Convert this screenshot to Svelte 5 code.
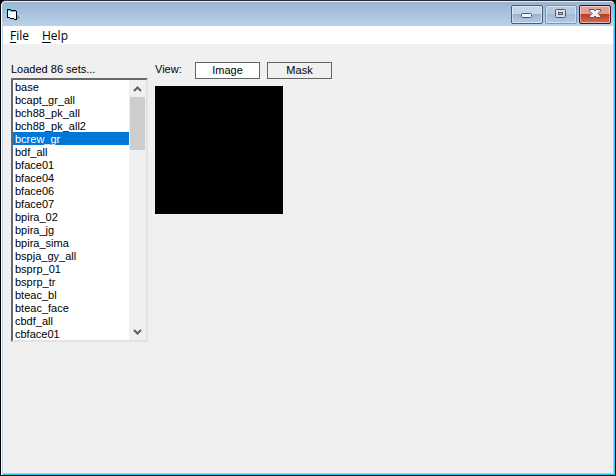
<script>
    const total = 86;
    const sets = [
        "base",
        "bcapt_gr_all",
        "bch88_pk_all",
        "bch88_pk_all2",
        "bcrew_gr",
        "bdf_all",
        "bface01",
        "bface04",
        "bface06",
        "bface07",
        "bpira_02",
        "bpira_jg",
        "bpira_sima",
        "bspja_gy_all",
        "bsprp_01",
        "bsprp_tr",
        "bteac_bl",
        "bteac_face",
        "cbdf_all",
        "cbface01",
    ];

    let selected = $state("bcrew_gr");
    let view = $state("image");
    let list;

    // thumb covers the share of rows that fit in the list
    const thumbSize = (sets.length / total) * 100;

    function scrollRows(n) {
        list.scrollTop += n * 13;
    }
</script>

<div class="window">
    <header class="title-bar">
        <svg class="app-icon" viewBox="0 0 14 12" shape-rendering="crispEdges">
            <path d="M10 6h1v1h1v1h1v1h-1v1h-2z" fill="#8a8f98" />
            <path d="M0 0h4v1h5v1h1v9H7v-1H3V9H0z" fill="#000" />
            <path d="M1 2h3v1h5v7H7V9H3V8H1z" fill="#fff" />
            <path d="M1 1h3v1H1zM3 2h6v1H3z" fill="#00e5e5" />
        </svg>
        <div class="caption-buttons">
            <button class="caption" aria-label="Minimize">
                <svg viewBox="0 0 30 17">
                    <rect x="9.5" y="7.5" width="10" height="4" rx="1" fill="#f4f4f4" stroke="#555563" />
                </svg>
            </button>
            <button class="caption dim" aria-label="Maximize">
                <svg viewBox="0 0 30 17">
                    <rect x="9.5" y="3.5" width="10" height="8" rx="1" fill="#e0dce2" stroke="#555563" />
                    <rect x="12.5" y="6.5" width="4" height="2" fill="#a9c3e3" stroke="#555563" />
                </svg>
            </button>
            <button class="caption close" aria-label="Close">
                <svg viewBox="0 0 30 17">
                    <path
                        d="M9.5 3.5h4l1.5 1.5 1.5-1.5h4v1.5l-2.5 2.5 2.5 2.5v1.5h-4L15 10l-1.500 1.500h-4V10L12 7.500 9.500 5z"
                        fill="#f4f4f4"
                        stroke="#555563"
                    />
                </svg>
            </button>
        </div>
    </header>

    <nav class="menu-bar">
        <button accesskey="f"><u>F</u>ile</button>
        <button accesskey="h"><u>H</u>elp</button>
    </nav>

    <main>
        <section class="sets">
            <label for="sets">Loaded {total} sets...</label>
            <div class="list-box">
                <select id="sets" size="20" bind:value={selected} bind:this={list}>
                    {#each sets as name}
                        <option value={name}>{name}</option>
                    {/each}
                </select>
                <div class="scrollbar">
                    <button aria-label="Scroll up" onclick={() => scrollRows(-1)}>
                        <svg viewBox="0 0 9 6"><path d="M1 5l3.5-3.5L8 5" /></svg>
                    </button>
                    <div class="track">
                        <div class="thumb" style="height: {thumbSize}%"></div>
                    </div>
                    <button aria-label="Scroll down" onclick={() => scrollRows(1)}>
                        <svg viewBox="0 0 9 6"><path d="M1 1l3.5 3.5L8 1" /></svg>
                    </button>
                </div>
            </div>
        </section>

        <section class="viewer">
            <div class="view-row">
                <span class="view-label">View:</span>
                <button class:active={view === "image"} onclick={() => (view = "image")}>Image</button>
                <button class:active={view === "mask"} onclick={() => (view = "mask")}>Mask</button>
            </div>
            <div class="preview"></div>
        </section>
    </main>
</div>

<style>
    :global(body) {
        background: #000;
    }

    * {
        box-sizing: border-box;
    }

    button {
        margin: 0;
        padding: 0;
        border: 0;
        background: none;
        font: inherit;
        color: inherit;
    }

    .window {
        display: flex;
        flex-direction: column;
        min-height: 100vh;
        border: 1px solid #000;
        border-top-color: #2b2b38;
        border-radius: 6px 6px 0 0;
        background: #f0f0f0;
        box-shadow:
            inset 1px 0 #fff,
            inset 2px 0 #b9d1ea,
            inset -1px -1px #1fd0f5,
            inset -2px -2px #b9c8d8;
        font: 11px/15px "Liberation Sans", Arial, sans-serif;
        color: #000;
    }

    /* Title bar */
    .title-bar {
        display: flex;
        justify-content: space-between;
        align-items: flex-start;
        height: 25px;
        padding: 3px 3px 0 5px;
        border-top: 1px solid #e4edf7;
        border-left: 1px solid #fff;
        border-right: 1px solid #1fd0f5;
        border-radius: 5px 5px 0 0;
        background: linear-gradient(#99b4d1, #b9d1ea);
    }
    .app-icon {
        width: 14px;
        height: 12px;
        margin-top: 4px;
    }
    .caption-buttons {
        display: flex;
        gap: 2px;
    }
    .caption {
        width: 32px;
        height: 19px;
        border: 1px solid #4d5d75;
        border-radius: 2px;
        background: linear-gradient(#c3d5e9 0 45%, #9ab5d3 50%, #b5cde7);
        box-shadow: inset 0 0 0 1px rgba(255, 255, 255, 0.45);
    }
    .caption svg {
        display: block;
        width: 30px;
        height: 17px;
    }
    .caption.dim {
        border-color: #7b94b3;
        background: linear-gradient(#b4cae3 0 45%, #a2bddb 50%, #b0c9e5);
    }
    .caption.close {
        border-color: #4a1020;
        background: linear-gradient(#e0a093 0 45%, #bb3c26 50%, #d1705a);
    }

    /* Menu */
    .menu-bar {
        display: flex;
        gap: 13px;
        height: 18px;
        margin: 0 2px;
        padding-left: 7px;
        background: #fff;
        font: 12px/20px "Open Sans", "Noto Sans", sans-serif;
    }
    .menu-bar u {
        text-underline-offset: 2px;
    }

    /* Body */
    main {
        display: flex;
        align-items: flex-start;
        gap: 7px;
        padding: 18px 10px;
    }
    .sets {
        width: 137px;
    }
    .sets label {
        display: block;
        margin-bottom: 1px;
    }
    .list-box {
        display: flex;
        border: 2px solid;
        border-color: #696969 #e3e3e3 #e3e3e3 #696969;
        background: #fff;
    }
    select {
        flex: 1;
        min-width: 0;
        height: 260px;
        margin: 0;
        padding: 0;
        border: 0;
        outline: 0;
        border-radius: 0;
        background: #fff;
        font: inherit;
        color: #000;
        overflow-y: auto;
        scrollbar-width: none;
    }
    option {
        height: 13px;
        min-height: 13px;
        padding: 1px 2px 0;
        line-height: 13px;
    }
    option:checked {
        background: #0078d7 linear-gradient(#0078d7, #0078d7);
        color: #fff;
        -webkit-text-fill-color: #fff;
    }

    .scrollbar {
        display: flex;
        flex-direction: column;
        width: 17px;
        background: #f0f0f0;
    }
    .scrollbar button {
        display: flex;
        align-items: center;
        justify-content: center;
        height: 17px;
    }
    .scrollbar svg {
        width: 9px;
        height: 6px;
        fill: none;
        stroke: #606060;
        stroke-width: 2;
    }
    .track {
        flex: 1;
        padding: 0 1px;
    }
    .thumb {
        background: #cdcdcd;
    }

    .view-row {
        display: flex;
        gap: 7px;
    }
    .view-label {
        width: 33px;
    }
    .view-row button {
        width: 65px;
        height: 17px;
        border: 1px solid #646464;
    }
    .view-row button.active {
        background: #fff;
    }
    .preview {
        width: 128px;
        height: 128px;
        margin-top: 7px;
        background: #000;
    }
</style>
